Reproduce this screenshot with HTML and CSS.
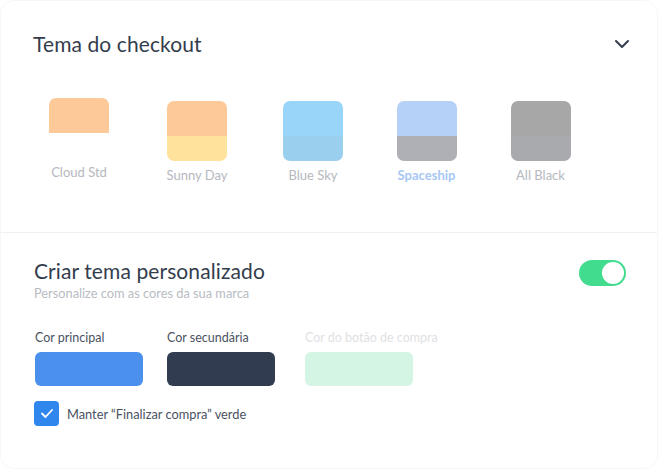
FILE: index.html
```html
<!DOCTYPE html>
<html lang="pt">
<head>
<meta charset="utf-8">
<link rel="stylesheet" href="styles.css">
</head>
<body>
<div class="card">
  <section class="themes">
    <div class="head">
      <h1 class="title">Tema do checkout</h1>
      <svg class="chev" width="16" height="10" viewBox="0 0 16 10"><path d="M2 2l6 6 6-6" fill="none" stroke="#333d4d" stroke-width="2" stroke-linecap="round" stroke-linejoin="round"/></svg>
    </div>
    <div class="theme-list">
      <div class="theme theme-cloud">
        <div class="sw"><span class="top" style="background:#fec998"></span><span class="bot" style="background:#ffffff"></span></div>
        <span class="name">Cloud Std</span>
      </div>
      <div class="theme">
        <div class="sw"><span class="top" style="background:#fec998"></span><span class="bot" style="background:#ffe39c"></span></div>
        <span class="name">Sunny Day</span>
      </div>
      <div class="theme">
        <div class="sw"><span class="top" style="background:#98d5f9"></span><span class="bot" style="background:#9bcfee"></span></div>
        <span class="name">Blue Sky</span>
      </div>
      <div class="theme active">
        <div class="sw"><span class="top" style="background:#b6d1f8"></span><span class="bot" style="background:#aeb0b6"></span></div>
        <span class="name">Spaceship</span>
      </div>
      <div class="theme">
        <div class="sw"><span class="top" style="background:#a7a7a7"></span><span class="bot" style="background:#a9aaae"></span></div>
        <span class="name">All Black</span>
      </div>
    </div>
  </section>
  <section class="custom">
    <div class="head2">
      <div>
        <h2 class="title">Criar tema personalizado</h2>
        <p class="sub">Personalize com as cores da sua marca</p>
      </div>
      <div class="toggle"><span class="knob"></span></div>
    </div>
    <div class="colors">
      <div class="color">
        <span class="clabel">Cor principal</span>
        <span class="cbox" style="background:#4a90ec"></span>
      </div>
      <div class="color">
        <span class="clabel">Cor secundária</span>
        <span class="cbox" style="background:#323c50"></span>
      </div>
      <div class="color disabled">
        <span class="clabel">Cor do botão de compra</span>
        <span class="cbox" style="background:#d4f5e4"></span>
      </div>
    </div>
    <label class="check">
      <span class="cb"><svg width="14" height="11" viewBox="0 0 14 11"><path d="M2 5.5l3.5 3.5L12 2" fill="none" stroke="#fff" stroke-width="1.8" stroke-linecap="round" stroke-linejoin="round"/></svg></span>
      <span class="clab">Manter “Finalizar compra” verde</span>
    </label>
  </section>
</div>
</body>
</html>
```
FILE: styles.css
```css
* { box-sizing: border-box; }
html, body { margin: 0; padding: 0; background: #fff; }
body { font-family: "Lato", "Noto Sans", sans-serif; color: #333d4d; }
.card {
  width: 658px; height: 469px;
  border: 1px solid #f7f7f9;
  border-radius: 14px;
  background: #fff;
  overflow: hidden;
}
.themes { padding: 30px 27px 0 32px; height: 232px; border-bottom: 1px solid #f0f0f2; }
.head { display: flex; justify-content: space-between; align-items: center; }
.title { margin: 0; font-size: 21px; font-weight: 400; line-height: 26px; color: #333d4d; letter-spacing: 0.1px; }
.theme-list {
  display: grid;
  grid-template-columns: 118px 118px 114px 113px 115px;
  margin: 44px 0 0 -13px;
}
.theme { display: flex; flex-direction: column; align-items: center; }
.theme-cloud { margin-top: -3px; }
.sw { width: 60px; height: 60px; border-radius: 7px; overflow: hidden; display: flex; flex-direction: column; }
.theme-cloud .sw { border-radius: 7px 7px 0 0; }
.sw .top { height: 35px; }
.sw .bot { flex: 1; }
.name { margin-top: 6px; font-size: 13px; line-height: 16px; color: #b5b8be; }
.active .name { color: #a7c7f4; font-weight: 700; }
.custom { padding: 25px 31px 0 33px; }
.head2 { display: flex; justify-content: space-between; align-items: flex-start; }
.sub { margin: 1px 0 0 0; font-size: 12.8px; line-height: 16px; color: #b8bcc3; }
.toggle {
  width: 47px; height: 26px; border-radius: 13px; background: #42dc8f;
  display: flex; justify-content: flex-end; align-items: center; padding: 0 2px;
  margin-top: 2px;
}
.knob { width: 22px; height: 22px; border-radius: 50%; background: #fff; }
.colors { display: flex; gap: 24px; margin: 29px 0 0 1px; }
.color { display: flex; flex-direction: column; gap: 6px; width: 108px; }
.color:nth-child(2) { margin-right: 6px; }
.clabel { font-size: 12.5px; line-height: 16px; color: #4a5262; white-space: nowrap; }
.disabled .clabel { color: #dfe1e5; }
.cbox { height: 34px; border-radius: 6px; display: block; }
.check { display: flex; align-items: center; gap: 8px; margin-top: 15px; }
.cb { width: 25px; height: 25px; border-radius: 4px; background: #2f86ec; display: flex; align-items: center; justify-content: center; }
.clab { font-size: 12.8px; color: #4a5262; }
```
